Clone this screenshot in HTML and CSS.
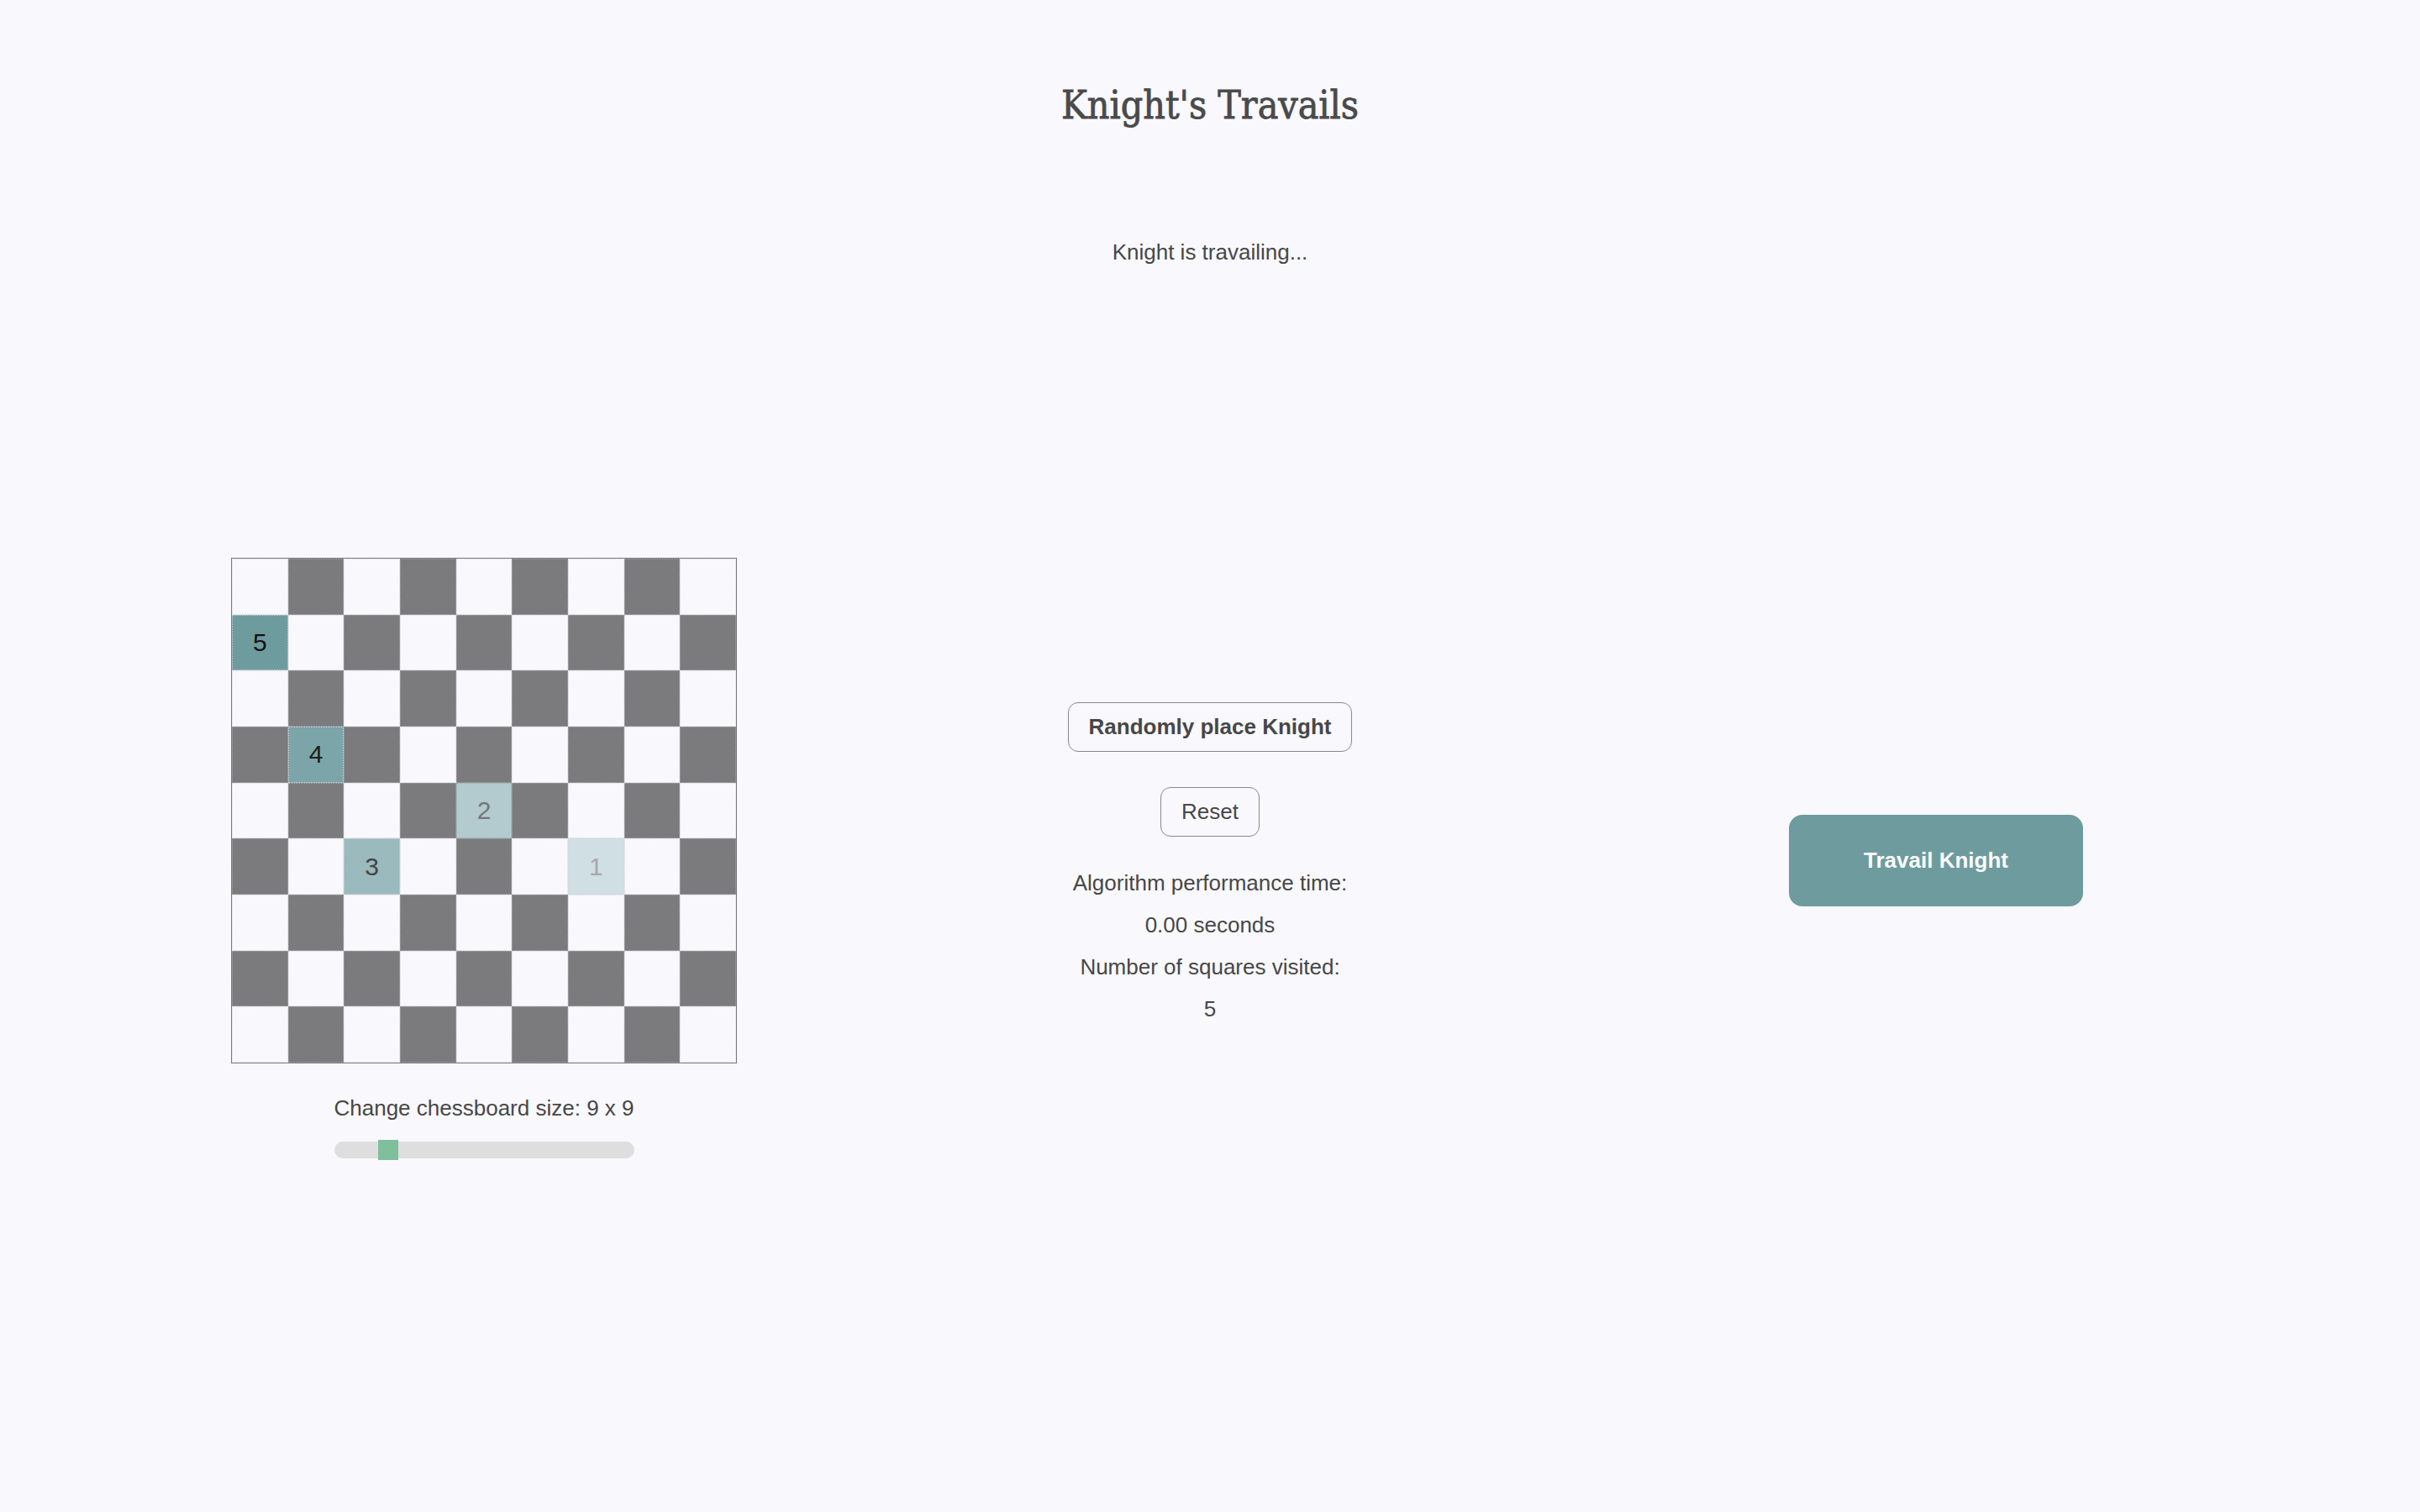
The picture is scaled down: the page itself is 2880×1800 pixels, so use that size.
FILE: index.html
```html
<!DOCTYPE html>
<html lang="en">
<head>
<meta charset="utf-8">
<title>Knight's Travails</title>
<link rel="stylesheet" href="styles.css">
</head>
<body>
<header class="header">
  <h1 class="title">Knight's Travails</h1>
  <p class="status">Knight is travailing...</p>
</header>
<main class="layout">
  <section class="board-col">
    <div class="board">
      <div class="sq"></div><div class="sq dk"></div><div class="sq"></div><div class="sq dk"></div><div class="sq"></div><div class="sq dk"></div><div class="sq"></div><div class="sq dk"></div><div class="sq"></div>
      <div class="sq v5">5</div><div class="sq"></div><div class="sq dk"></div><div class="sq"></div><div class="sq dk"></div><div class="sq"></div><div class="sq dk"></div><div class="sq"></div><div class="sq dk"></div>
      <div class="sq"></div><div class="sq dk"></div><div class="sq"></div><div class="sq dk"></div><div class="sq"></div><div class="sq dk"></div><div class="sq"></div><div class="sq dk"></div><div class="sq"></div>
      <div class="sq dk"></div><div class="sq v4">4</div><div class="sq dk"></div><div class="sq"></div><div class="sq dk"></div><div class="sq"></div><div class="sq dk"></div><div class="sq"></div><div class="sq dk"></div>
      <div class="sq"></div><div class="sq dk"></div><div class="sq"></div><div class="sq dk"></div><div class="sq v2">2</div><div class="sq dk"></div><div class="sq"></div><div class="sq dk"></div><div class="sq"></div>
      <div class="sq dk"></div><div class="sq"></div><div class="sq v3">3</div><div class="sq"></div><div class="sq dk"></div><div class="sq"></div><div class="sq v1">1</div><div class="sq"></div><div class="sq dk"></div>
      <div class="sq"></div><div class="sq dk"></div><div class="sq"></div><div class="sq dk"></div><div class="sq"></div><div class="sq dk"></div><div class="sq"></div><div class="sq dk"></div><div class="sq"></div>
      <div class="sq dk"></div><div class="sq"></div><div class="sq dk"></div><div class="sq"></div><div class="sq dk"></div><div class="sq"></div><div class="sq dk"></div><div class="sq"></div><div class="sq dk"></div>
      <div class="sq"></div><div class="sq dk"></div><div class="sq"></div><div class="sq dk"></div><div class="sq"></div><div class="sq dk"></div><div class="sq"></div><div class="sq dk"></div><div class="sq"></div>
    </div>
    <label class="size-label" for="size">Change chessboard size: 9 x 9</label>
    <input class="size-slider" id="size" type="range" min="6" max="25" value="9">
  </section>
  <section class="control-col">
    <button class="btn btn-bold" type="button">Randomly place Knight</button>
    <button class="btn btn-reset" type="button">Reset</button>
    <div class="stats">
      <p class="stat">Algorithm performance time:</p>
      <p class="stat">0.00 seconds</p>
      <p class="stat">Number of squares visited:</p>
      <p class="stat">5</p>
    </div>
  </section>
  <section class="action-col">
    <button class="travail" type="button">Travail Knight</button>
  </section>
</main>
</body>
</html>
```
FILE: styles.css
```css
* { box-sizing: border-box; }

html, body {
  margin: 0;
  padding: 0;
  background: #f8f8fd;
}

body {
  font-family: "Liberation Sans", Arial, sans-serif;
  font-size: 26px;
  color: #474747;
}

.header {
  display: flex;
  flex-direction: column;
  align-items: center;
  padding-top: 95px;
}

.title {
  margin: 0;
  font-family: "DejaVu Serif Condensed", "DejaVu Serif", serif;
  font-stretch: condensed;
  font-weight: normal;
  font-size: 46px;
  line-height: 60px;
  color: #4a4a4a;
  -webkit-text-stroke: 0.8px #4a4a4a;
}

.status {
  margin: 130px 0 0;
  line-height: 30px;
}

.layout {
  width: 90%;
  margin: 349px auto 0;
  display: grid;
  grid-template-columns: repeat(3, 1fr);
  align-items: center;
}

.board-col {
  display: flex;
  flex-direction: column;
  align-items: center;
  padding-bottom: 4px;
}

.board {
  width: 602px;
  height: 602px;
  border: 1px solid #7b7b7d;
  display: grid;
  grid-template-columns: repeat(9, 1fr);
  grid-template-rows: repeat(9, 1fr);
}

.sq {
  background: #f8f8fd;
  border: 1px dotted #d6d6de;
  display: flex;
  align-items: center;
  justify-content: center;
  font-size: 30px;
}

.sq.dk { background: #7b7b7d; border-color: #a9a9ad; }
.sq.v5 { background: #6e9c9e; color: #111; }
.sq.v4 { background: #7ba5a8; color: #1c1c1c; }
.sq.v3 { background: #9bbabd; color: #444; }
.sq.v2 { background: #b3cbcf; color: #777; border-color: #8fa9ad; }
.sq.v1 { background: #cfdfe3; color: #a9a9a9; }

.size-label {
  margin-top: 38px;
  line-height: 30px;
}

.size-slider {
  -webkit-appearance: none;
  appearance: none;
  width: 357px;
  height: 24px;
  margin: 23px 0 0;
  padding: 0;
  background: transparent;
}

.size-slider::-webkit-slider-runnable-track {
  height: 20px;
  background: #dededf;
  border-radius: 10px;
}

.size-slider::-webkit-slider-thumb {
  -webkit-appearance: none;
  appearance: none;
  width: 24px;
  height: 24px;
  margin-top: -2px;
  background: #7fbf9b;
  border: none;
  border-radius: 0;
}

.control-col {
  display: flex;
  flex-direction: column;
  align-items: center;
  padding-top: 12px;
}

.btn {
  font-family: "Liberation Sans", Arial, sans-serif;
  font-size: 26px;
  line-height: 29px;
  color: #474747;
  background: transparent;
  border: 1px solid #8a8a8a;
  border-radius: 12px;
  padding: 14px 24px;
  margin: 0;
}

.btn-bold { font-weight: bold; }
.btn-reset { margin-top: 42px; }

.stats {
  margin-top: 30px;
  display: flex;
  flex-direction: column;
  align-items: center;
}

.stat {
  margin: 0;
  line-height: 50px;
}

.action-col {
  display: flex;
  justify-content: center;
}

.travail {
  width: 350px;
  height: 109px;
  border: none;
  border-radius: 16px;
  background: #6e9c9e;
  color: #fbfbfd;
  font-family: "Liberation Sans", Arial, sans-serif;
  font-weight: bold;
  font-size: 26px;
  padding: 0;
}
```
